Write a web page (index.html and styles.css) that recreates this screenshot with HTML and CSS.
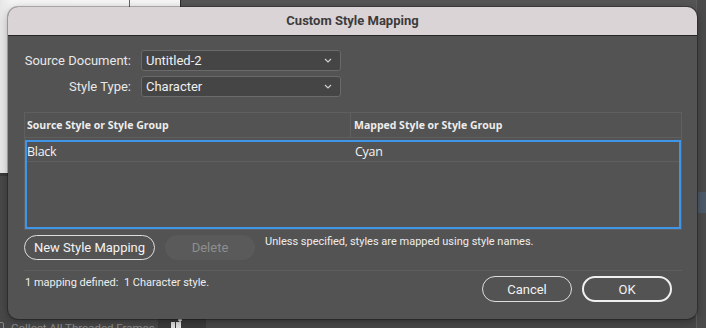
FILE: index.html
```html
<!DOCTYPE html>
<html>
<head>
<meta charset="utf-8">
<link rel="stylesheet" href="styles.css">
</head>
<body>
<div class="desk">
  <div class="bg-panel"><span class="bg-purple"></span></div>
  <div class="bg-lower"></div>
  <div class="bg-right"><span class="bg-accent"></span></div>
  <div class="bg-bottom">
    <span class="bg-check"></span>
    <span class="bg-label">Collect All Threaded Frames</span>
    <span class="bg-tool">
      <svg width="14" height="12" viewBox="0 0 14 12"><rect x="1" y="4" width="4" height="8" fill="#e0e0e0"/><rect x="6" y="4" width="5" height="8" fill="#e0e0e0"/><path d="M10 0v4M8 2h4" stroke="#e0e0e0" stroke-width="1.4"/></svg>
    </span>
  </div>

  <div class="dialog">
    <div class="titlebar">Custom Style Mapping</div>
    <div class="dbody">
      <div class="form">
        <label class="flabel">Source Document:</label>
        <div class="select"><span>Untitled-2</span>
          <svg class="chev" width="8" height="5" viewBox="0 0 8 5"><path d="M1 1l3 3 3-3" fill="none" stroke="#cfcfcf" stroke-width="1.2"/></svg>
        </div>
        <label class="flabel">Style Type:</label>
        <div class="select"><span>Character</span>
          <svg class="chev" width="8" height="5" viewBox="0 0 8 5"><path d="M1 1l3 3 3-3" fill="none" stroke="#cfcfcf" stroke-width="1.2"/></svg>
        </div>
      </div>

      <div class="table">
        <div class="thead">
          <div class="th th1">Source Style or Style Group</div>
          <div class="th th2">Mapped Style or Style Group</div>
        </div>
        <div class="tbody">
          <div class="row">
            <div class="td td1">Black</div>
            <div class="td td2">Cyan</div>
          </div>
        </div>
      </div>

      <div class="actions">
        <button class="btn pill">New Style Mapping</button>
        <button class="btn disabled">Delete</button>
        <p class="note">Unless specified, styles are mapped using style names.</p>
      </div>

      <div class="sep"></div>

      <div class="footer">
        <p class="summary">1 mapping defined:&nbsp; 1 Character style.</p>
        <div class="footbtns">
          <button class="btn pill wide">Cancel</button>
          <button class="btn pill wide default">OK</button>
        </div>
      </div>
    </div>
  </div>
</div>
</body>
</html>
```

FILE: styles.css
```css
* { box-sizing: border-box; }
html, body { margin: 0; padding: 0; }
body {
  width: 706px;
  height: 328px;
  overflow: hidden;
  background: #555555;
  font-family: Roboto, "Liberation Sans", sans-serif;
}
.desk { position: relative; width: 706px; height: 328px; }

.bg-panel {
  position: absolute; left: 0; top: 0; width: 181px; height: 173px;
  background: linear-gradient(90deg, #e6e6e6 0, #f4f4f4 12px, #f6f6f6 100%);
  border-right: 1px solid #2e2e2e;
}
.bg-purple { position: absolute; left: 129px; top: 0; width: 1px; height: 10px; background: #8d3bdc; }
.bg-lower {
  position: absolute; left: 0; top: 173px; width: 30px; height: 155px;
  background: #484848; border-top: 3px solid #3a3a3a;
}
.bg-right {
  position: absolute; left: 696px; top: 0; width: 10px; height: 328px;
  background: #4b4b4b; border-left: 1px solid #5e5e5e;
}
.bg-accent { position: absolute; left: 1px; top: 192px; width: 9px; height: 21px; background: #4c5a68; }
.bg-bottom {
  position: absolute; left: 0; top: 316px; width: 696px; height: 12px;
  background: #474747;
}
.bg-check { position: absolute; left: -3px; top: 6px; width: 7px; height: 10px; border: 1px solid #8a8a8a; border-radius: 2px; }
.bg-label { position: absolute; left: 11px; top: 5px; font-size: 11.5px; line-height: 14px; color: #8c8c8c; font-family: Roboto, sans-serif; }
.bg-tool { position: absolute; left: 158px; top: 0; width: 48px; height: 12px; background: #3a3a3a; }
.bg-tool svg { position: absolute; left: 12px; top: 2px; }

.dialog {
  position: absolute; left: 8px; top: 7px; width: 689px; height: 312px;
  border-radius: 10px; overflow: hidden;
  background: #535353;
  box-shadow: 0 0 0 1px rgba(0,0,0,0.25), 0 2px 8px rgba(0,0,0,0.35);
}
.titlebar {
  height: 29px;
  background: #dad4d6;
  border-bottom: 1px solid #262626;
  text-align: center;
  font-weight: 700; font-size: 13px; line-height: 28px;
  color: #3d3b3c;
}
.dbody { padding: 14px 15px 0 16px; color: #ececec; }

.form {
  display: grid;
  grid-template-columns: 107px 200px;
  column-gap: 10px; row-gap: 5px;
}
.flabel { text-align: right; font-size: 13px; line-height: 21px; color: #e8e8e8; }
.select {
  height: 21px;
  background: #454545;
  border: 1px solid #6a6a6a;
  border-radius: 3px;
  display: flex; align-items: center; justify-content: space-between;
  padding: 0 8px 0 4px;
  font-size: 13px; color: #f0f0f0;
}
.chev { display: block; }

.table {
  margin-top: 15px;
  width: 658px; height: 118px;
  border: 1px solid #5f5f5f;
}
.thead {
  display: grid; grid-template-columns: 326px 1fr;
  height: 25px; border-bottom: 1px solid #5f5f5f;
}
.th {
  font-family: "Open Sans", "Liberation Sans", sans-serif;
  font-weight: 700; font-size: 10.5px; line-height: 24px; color: #ededed;
}
.th1 { padding-left: 2px; border-right: 1px solid #5f5f5f; }
.th2 { padding-left: 3px; }
.tbody {
  margin-top: 2px;
  height: 89px;
  border: 2px solid #3f96e8;
}
.row {
  display: grid; grid-template-columns: 325px 1fr;
  height: 20px; border-bottom: 1px solid #5f5f5f;
}
.td {
  font-family: "Open Sans", "Liberation Sans", sans-serif;
  font-size: 12.5px; letter-spacing: -0.3px; line-height: 20px; color: #f2f2f2;
}
.td2 { padding-left: 3px; }

.actions { display: flex; align-items: flex-start; margin-top: 5px; gap: 10px; }
.btn {
  font-family: Roboto, "Liberation Sans", sans-serif;
  font-size: 13px; height: 25px; padding: 0;
  background: transparent; color: #f2f2f2;
  border: none; border-radius: 13px;
}
.pill { border: 1.5px solid #dedede; width: 131px; }
.disabled { width: 90px; background: #5a5a5a; color: #8e8e8e; }
.note { margin: 0; font-size: 11px; line-height: 14px; color: #eeeeee; }

.sep { margin-top: 10px; width: 658px; height: 1px; background: #5e5e5e; }

.footer {
  display: flex; justify-content: space-between; align-items: flex-start;
  width: 658px; margin-top: 5px; padding-right: 10px;
}
.summary { margin: 0; font-size: 11px; line-height: 14px; color: #eeeeee; padding-left: 1px; }
.footbtns { display: flex; gap: 10px; }
.wide { width: 90px; height: 26px; }
.default { border-width: 2px; border-color: #f0f0f0; }
```
